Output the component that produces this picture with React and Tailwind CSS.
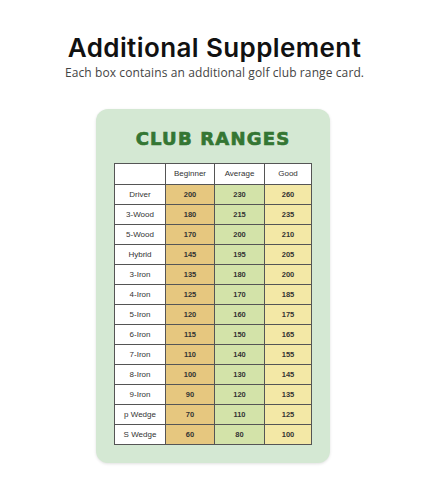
const rows = [
  ['Driver', 200, 230, 260],
  ['3-Wood', 180, 215, 235],
  ['5-Wood', 170, 200, 210],
  ['Hybrid', 145, 195, 205],
  ['3-Iron', 135, 180, 200],
  ['4-Iron', 125, 170, 185],
  ['5-Iron', 120, 160, 175],
  ['6-Iron', 115, 150, 165],
  ['7-Iron', 110, 140, 155],
  ['8-Iron', 100, 130, 145],
  ['9-Iron', 90, 120, 135],
  ['p Wedge', 70, 110, 125],
  ['S Wedge', 60, 80, 100],
];

export default function App() {
  return (
    <div className="w-[433px] h-[500px] bg-white flex flex-col items-center pt-[33px] pr-[4px]">
      <h1 className="text-[26px] leading-[30px] font-semibold text-[#111] tracking-[0.4px]" style={{ fontFamily: 'Inter, sans-serif' }}>
        Additional Supplement
      </h1>
      <p className="mt-[2px] text-[12px] leading-[16px] text-[#444] tracking-[0.1px]" style={{ fontFamily: '"Open Sans", sans-serif' }}>
        Each box contains an additional golf club range card.
      </p>

      <div className="mt-[28px] mr-[3px] w-[234px] h-[354px] rounded-[12px] bg-[#d4e8d3] shadow-[0_1px_3px_rgba(0,0,0,0.12)] flex flex-col items-center pt-[19px]">
        <h2 className="text-[18px] leading-[22px] font-bold text-[#347633] tracking-[1.2px] [-webkit-text-stroke:0.7px_#347633]" style={{ fontFamily: '"DejaVu Sans", sans-serif' }}>
          CLUB RANGES
        </h2>
        <table className="mt-[13px] border-collapse border border-[#555] text-[#333]" style={{ fontFamily: '"Liberation Sans", Arial, sans-serif' }}>
          <thead>
            <tr className="h-[21px] bg-white text-[8px]">
              <th className="w-[51px] border border-[#555] font-normal"></th>
              <th className="w-[49px] border border-[#555] font-normal">Beginner</th>
              <th className="w-[50px] border border-[#555] font-normal">Average</th>
              <th className="w-[47px] border border-[#555] font-normal">Good</th>
            </tr>
          </thead>
          <tbody>
            {rows.map((r) => (
              <tr key={r[0]} className="h-[20px]">
                <td className="border border-[#555] bg-white text-center text-[8px]">{r[0]}</td>
                <td className="border border-[#555] bg-[#e6c77f] text-center text-[7.5px] font-bold">{r[1]}</td>
                <td className="border border-[#555] bg-[#d3e3a9] text-center text-[7.5px] font-bold">{r[2]}</td>
                <td className="border border-[#555] bg-[#f3e8a6] text-center text-[7.5px] font-bold">{r[3]}</td>
              </tr>
            ))}
          </tbody>
        </table>
      </div>
    </div>
  );
}
